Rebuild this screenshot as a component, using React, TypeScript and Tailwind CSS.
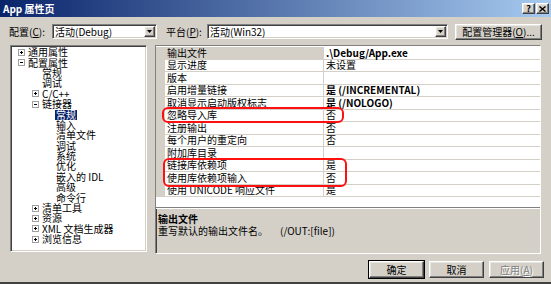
import React from "react";

const FONT = { fontFamily: '"Noto Sans CJK SC", "Noto Sans", sans-serif' };

const raised =
  "border border-t-white border-l-white border-b-[#404040] border-r-[#404040] shadow-[inset_-1px_-1px_0_#808080,inset_1px_1px_0_#e8e6e0]";
const sunken =
  "border border-t-[#808080] border-l-[#808080] border-b-white border-r-white shadow-[inset_1px_1px_0_#404040,inset_-1px_-1px_0_#d4d0c8]";

type Node = { d: number; t: string; exp?: "+" | "-"; sel?: boolean };
const tree: Node[] = [
  { d: 0, exp: "+", t: "通用属性" },
  { d: 0, exp: "-", t: "配置属性" },
  { d: 1, t: "常规" },
  { d: 1, t: "调试" },
  { d: 1, exp: "+", t: "C/C++" },
  { d: 1, exp: "-", t: "链接器" },
  { d: 2, t: "常规", sel: true },
  { d: 2, t: "输入" },
  { d: 2, t: "清单文件" },
  { d: 2, t: "调试" },
  { d: 2, t: "系统" },
  { d: 2, t: "优化" },
  { d: 2, t: "嵌入的 IDL" },
  { d: 2, t: "高级" },
  { d: 2, t: "命令行" },
  { d: 1, exp: "+", t: "清单工具" },
  { d: 1, exp: "+", t: "资源" },
  { d: 1, exp: "+", t: "XML 文档生成器" },
  { d: 1, exp: "+", t: "浏览信息" },
];
const indent = ["pl-[7px]", "pl-[21px]", "pl-[35px]"];

const rows: { n: string; v: string; b?: boolean }[] = [
  { n: "输出文件", v: ".\\Debug/App.exe", b: true },
  { n: "显示进度", v: "未设置" },
  { n: "版本", v: "" },
  { n: "启用增量链接", v: "是 (/INCREMENTAL)", b: true },
  { n: "取消显示启动版权标志", v: "是 (/NOLOGO)", b: true },
  { n: "忽略导入库", v: "否" },
  { n: "注册输出", v: "否" },
  { n: "每个用户的重定向", v: "否" },
  { n: "附加库目录", v: "" },
  { n: "链接库依赖项", v: "是" },
  { n: "使用库依赖项输入", v: "否" },
  { n: "使用 UNICODE 响应文件", v: "是" },
];

function Expander({ kind }: { kind?: "+" | "-" }) {
  if (!kind) return <span className="w-[7px] h-[7px] shrink-0" />;
  return (
    <span className="relative w-[7px] h-[7px] shrink-0 border border-[#a0a0a0] bg-white">
      <span className="absolute left-[1px] top-[2px] w-[3px] h-[1px] bg-black" />
      {kind === "+" && <span className="absolute left-[2px] top-[1px] w-[1px] h-[3px] bg-black" />}
    </span>
  );
}

function Combo({ text, w }: { text: string; w: string }) {
  return (
    <div className={`${sunken} ${w} h-[15px] bg-white flex items-center justify-between pl-[2px] pr-[1px]`}>
      <span className="text-[10px] leading-[11px] text-black">{text}</span>
      <span className={`${raised} w-[11px] h-[11px] bg-[#d4d0c8] flex items-center justify-center`}>
        <svg width="5" height="3" viewBox="0 0 5 3">
          <path d="M0 0h5L2.5 3z" fill="#000" />
        </svg>
      </span>
    </div>
  );
}

export default function App() {
  return (
    <div style={FONT} className="relative w-[551px] h-[284px] bg-[#d4d0c8] overflow-hidden text-black flex flex-col">
      {/* title bar */}
      <div className="h-[17px] flex items-center justify-between pl-[3px] pr-[2px] bg-[linear-gradient(to_right,#0a246a,#a6caf0)]">
        <span className="text-white font-bold text-[10px] leading-[12px]">App 属性页</span>
        <div className="flex gap-[1px]">
          <span className={`${raised} w-[13px] h-[11px] bg-[#d4d0c8] flex items-center justify-center text-[9px] font-bold leading-none`}>?</span>
          <span className={`${raised} w-[13px] h-[11px] bg-[#d4d0c8] flex items-center justify-center`}>
            <svg width="7" height="6" viewBox="0 0 7 6">
              <path d="M0.5 0.5l6 5M6.5 0.5l-6 5" stroke="#000" strokeWidth="1.4" />
            </svg>
          </span>
        </div>
      </div>

      {/* config row */}
      <div className="mt-[7px] h-[15px] flex items-center text-[10px] leading-[11px]">
        <span className="ml-[9px] w-[43px]">配置(<span className="underline">C</span>):</span>
        <Combo text="活动(Debug)" w="w-[105px]" />
        <span className="ml-[9px] w-[41px]">平台(<span className="underline">P</span>):</span>
        <Combo text="活动(Win32)" w="w-[241px]" />
        <button className={`${raised} ml-[7px] w-[87px] h-[16px] bg-[#d4d0c8] text-[10px] leading-[11px] flex items-center justify-center`}>
          配置管理器(<span className="underline">O</span>)...
        </button>
      </div>

      {/* main */}
      <div className="mt-[6px] h-[209px] flex">
        {/* tree */}
        <div className={`${sunken} ml-[10px] w-[137px] h-[207px] bg-white pt-[1px]`}>
          {tree.map((it, i) => (
            <div key={i} className={`${indent[it.d]} h-[10.4px] flex items-center gap-[3px] text-[10px]`}>
              <Expander kind={it.exp} />
              <span className={`leading-[10px] whitespace-nowrap ${it.sel ? "bg-[#0a246a] text-white px-[1px] -ml-[1px]" : ""}`}>{it.t}</span>
            </div>
          ))}
        </div>

        {/* property grid + description */}
        <div className={`${sunken} ml-[8px] w-[386px] h-[209px] bg-[#d4d0c8] flex flex-col`}>
          <div className="h-[162px] bg-white flex flex-col pt-[1px] border-b border-[#808080]">
            {rows.map((r, i) => (
              <div key={i} className="h-[12.5px] flex text-[10px]">
                <div className="w-[9px] shrink-0 bg-[#d4d0c8]" />
                <div className={`w-[159px] shrink-0 pl-[2px] flex items-center border-b border-r border-[#d4d0c8] ${i === 0 ? "bg-[#d4d0c8]" : ""}`}>
                  <span className="leading-[10px] whitespace-nowrap">{r.n}</span>
                </div>
                <div className="flex-1 pl-[2px] flex items-center border-b border-[#d4d0c8]">
                  <span className={`leading-[10px] whitespace-nowrap ${r.b ? "font-bold" : ""}`}>{r.v}</span>
                </div>
              </div>
            ))}
          </div>
          <div className="flex-1 pl-[2px] pt-[4px] text-[10px] leading-[12px] border-t border-white">
            <div className="font-bold">输出文件</div>
            <div className="flex">
              <span className="w-[122px]">重写默认的输出文件名。</span>
              <span>(/OUT:[file])</span>
            </div>
          </div>
        </div>
      </div>

      {/* buttons */}
      <div className="mt-[7px] h-[17px] flex justify-end pr-[7px] gap-[5px] text-[10px]">
        <button className={`${raised} w-[55px] h-[17px] bg-[#d4d0c8] outline outline-1 outline-black -outline-offset-0 flex items-center justify-center leading-[11px]`}>确定</button>
        <button className={`${raised} w-[55px] h-[17px] bg-[#d4d0c8] flex items-center justify-center leading-[11px]`}>取消</button>
        <button className={`${raised} w-[55px] h-[17px] bg-[#d4d0c8] flex items-center justify-center leading-[11px] text-[#808080] [text-shadow:1px_1px_0_#fff]`}>
          应用(<span className="underline">A</span>)
        </button>
      </div>
      <div className="absolute left-0 right-0 bottom-0 h-[2px] bg-[#404040]" />

      {/* red annotation boxes */}
      <div className="absolute left-[162px] top-[107px] w-[182px] h-[16px] border-2 border-[#ff1010] rounded-[6px]" />
      <div className="absolute left-[163px] top-[158px] w-[184px] h-[29px] border-2 border-[#ff1010] rounded-[6px]" />
    </div>
  );
}
